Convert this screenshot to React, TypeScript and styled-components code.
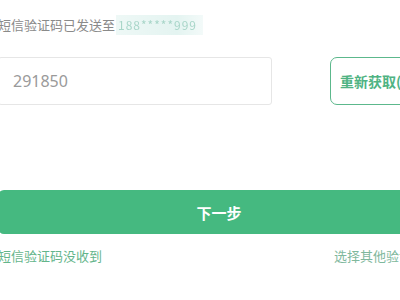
import React from "react";
import styled, { createGlobalStyle } from "styled-components";

const Global = createGlobalStyle`
  html, body { margin: 0; padding: 0; background: #fff; overflow: hidden; }
  body { font-family: "Noto Sans CJK SC", "Noto Sans", sans-serif; }
`;

const Page = styled.div`
  width: 442px;
  margin-left: -2px;
  padding-top: 15px;
  display: flex;
  flex-direction: column;
`;

const Sent = styled.div`
  display: flex;
  align-items: center;
  font-size: 13px;
  line-height: 20px;
  color: #8a8a8a;
`;

const Phone = styled.span`
  margin-left: 1px;
  padding: 0 6px 0 2px;
  background: linear-gradient(90deg, #eef8f6, #e4f4f1 70%, #f3faf9);
  color: #a9d6c9;
  letter-spacing: 1px;
  font-size: 12px;
  filter: blur(0.6px);
`;

const CodeRow = styled.div`
  margin-top: 22px;
  display: flex;
  align-items: stretch;
  gap: 58px;
  height: 48px;
`;

const CodeInput = styled.div`
  box-sizing: border-box;
  width: 274px;
  border: 1px solid #e6e6e6;
  border-radius: 3px;
  display: flex;
  align-items: center;
  padding-left: 14px;
  font-family: "Noto Sans", "Open Sans", sans-serif;
  font-size: 16px;
  color: #9a9a9a;
`;

const Resend = styled.div`
  box-sizing: border-box;
  flex: 1;
  border: 1px solid #5cb88c;
  border-radius: 7px;
  display: flex;
  align-items: center;
  padding-left: 9px;
  font-size: 14px;
  font-weight: 700;
  color: #4fb383;
  white-space: nowrap;
`;

const NextButton = styled.div`
  margin-top: 85px;
  height: 44px;
  border-radius: 6px;
  background: #45b980;
  color: #fff;
  font-size: 15px;
  font-weight: 700;
  display: flex;
  align-items: center;
  justify-content: center;
`;

const Links = styled.div`
  margin-top: 12px;
  display: flex;
  justify-content: space-between;
  font-size: 13px;
  line-height: 20px;
  color: #64b58b;
`;

const OtherLink = styled.span`
  margin-right: 2px;
  color: #7fb89d;
  white-space: nowrap;
`;

export default function App() {
  return (
    <>
      <Global />
      <Page>
        <Sent>
          短信验证码已发送至<Phone>188*****999</Phone>
        </Sent>
        <CodeRow>
          <CodeInput>291850</CodeInput>
          <Resend>重新获取(59)</Resend>
        </CodeRow>
        <NextButton>下一步</NextButton>
        <Links>
          <span>短信验证码没收到</span>
          <OtherLink>选择其他验证方式</OtherLink>
        </Links>
      </Page>
    </>
  );
}
